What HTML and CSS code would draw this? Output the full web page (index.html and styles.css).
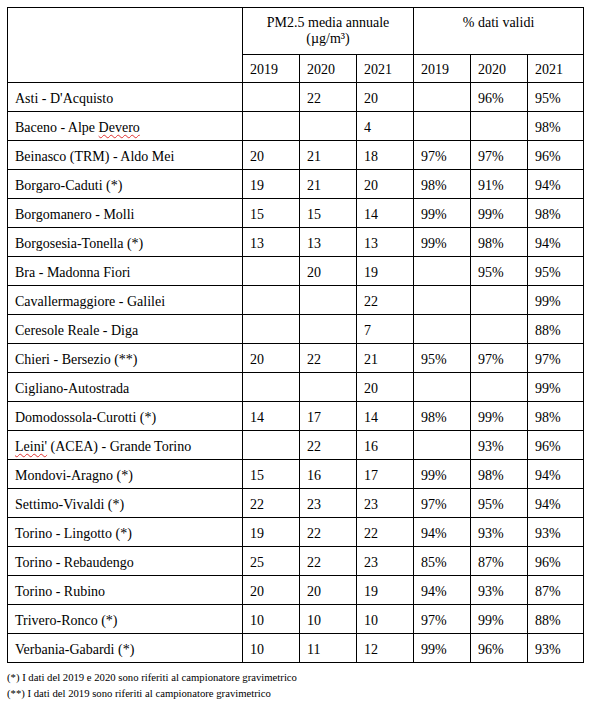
FILE: index.html
```html
<!DOCTYPE html>
<html lang="it">
<head>
<meta charset="utf-8">
<link rel="stylesheet" href="styles.css">
</head>
<body>
<div class="page">
<table class="data">
<colgroup>
<col class="c-name"><col class="c-n"><col class="c-n"><col class="c-n"><col class="c-n"><col class="c-n"><col class="c-last">
</colgroup>
<thead>
<tr class="h1">
<th rowspan="2"></th>
<th colspan="3">PM2.5 media annuale<br>(µg/m³)</th>
<th colspan="3">% dati validi</th>
</tr>
<tr class="h2">
<td>2019</td><td>2020</td><td>2021</td><td>2019</td><td>2020</td><td>2021</td>
</tr>
</thead>
<tbody>
<tr><td>Asti - D'Acquisto</td><td></td><td>22</td><td>20</td><td></td><td>96%</td><td>95%</td></tr>
<tr><td>Baceno - Alpe <span class="sp">Devero</span></td><td></td><td></td><td>4</td><td></td><td></td><td>98%</td></tr>
<tr><td>Beinasco (TRM) - Aldo Mei</td><td>20</td><td>21</td><td>18</td><td>97%</td><td>97%</td><td>96%</td></tr>
<tr><td>Borgaro-Caduti (*)</td><td>19</td><td>21</td><td>20</td><td>98%</td><td>91%</td><td>94%</td></tr>
<tr><td>Borgomanero - Molli</td><td>15</td><td>15</td><td>14</td><td>99%</td><td>99%</td><td>98%</td></tr>
<tr><td>Borgosesia-Tonella (*)</td><td>13</td><td>13</td><td>13</td><td>99%</td><td>98%</td><td>94%</td></tr>
<tr><td>Bra - Madonna Fiori</td><td></td><td>20</td><td>19</td><td></td><td>95%</td><td>95%</td></tr>
<tr><td>Cavallermaggiore - Galilei</td><td></td><td></td><td>22</td><td></td><td></td><td>99%</td></tr>
<tr><td>Ceresole Reale - Diga</td><td></td><td></td><td>7</td><td></td><td></td><td>88%</td></tr>
<tr><td>Chieri - Bersezio (**)</td><td>20</td><td>22</td><td>21</td><td>95%</td><td>97%</td><td>97%</td></tr>
<tr><td>Cigliano-Autostrada</td><td></td><td></td><td>20</td><td></td><td></td><td>99%</td></tr>
<tr><td>Domodossola-Curotti (*)</td><td>14</td><td>17</td><td>14</td><td>98%</td><td>99%</td><td>98%</td></tr>
<tr><td><span class="sp">Leini'</span> (ACEA) - Grande Torino</td><td></td><td>22</td><td>16</td><td></td><td>93%</td><td>96%</td></tr>
<tr><td>Mondovi-Aragno (*)</td><td>15</td><td>16</td><td>17</td><td>99%</td><td>98%</td><td>94%</td></tr>
<tr><td>Settimo-Vivaldi (*)</td><td>22</td><td>23</td><td>23</td><td>97%</td><td>95%</td><td>94%</td></tr>
<tr><td>Torino - Lingotto (*)</td><td>19</td><td>22</td><td>22</td><td>94%</td><td>93%</td><td>93%</td></tr>
<tr><td>Torino - Rebaudengo</td><td>25</td><td>22</td><td>23</td><td>85%</td><td>87%</td><td>96%</td></tr>
<tr><td>Torino - Rubino</td><td>20</td><td>20</td><td>19</td><td>94%</td><td>93%</td><td>87%</td></tr>
<tr><td>Trivero-Ronco (*)</td><td>10</td><td>10</td><td>10</td><td>97%</td><td>99%</td><td>88%</td></tr>
<tr><td>Verbania-Gabardi (*)</td><td>10</td><td>11</td><td>12</td><td>99%</td><td>96%</td><td>93%</td></tr>
</tbody>
</table>
<p class="note">(*) I dati del 2019 e 2020 sono riferiti al campionatore gravimetrico</p>
<p class="note">(**) I dati del 2019 sono riferiti al campionatore gravimetrico</p>
</div>
</body>
</html>
```
FILE: styles.css
```css
html, body {
  margin: 0;
  padding: 0;
  background: #ffffff;
}
.page {
  padding: 7px 0 0 7px;
  font-family: "Liberation Serif", "Times New Roman", serif;
  color: #000;
}
.data {
  border-collapse: collapse;
  table-layout: fixed;
  width: 576px;
  font-size: 14px;
}
.c-name { width: 235px; }
.c-n { width: 57px; }
.c-last { width: 56px; }
.data th, .data td {
  border: 1px solid #000;
  padding: 0 0 0 7px;
  text-align: left;
  font-weight: normal;
  line-height: 16px;
  vertical-align: middle;
}
.data tr.h1 th {
  height: 47px;
  vertical-align: top;
  text-align: center;
  padding: 7px 0 0 0;
  box-sizing: border-box;
}
.data tr.h2 td {
  height: 28px;
  padding-top: 2px;
  box-sizing: border-box;
}
.data tbody td {
  height: 29px;
  padding-top: 4px;
  box-sizing: border-box;
}
.sp {
  text-decoration: underline wavy #e03030;
  text-decoration-thickness: 1px;
  text-underline-offset: 2px;
}
.note {
  margin: 0;
  font-size: 10.7px;
  line-height: 16px;
}
.note:first-of-type {
  margin-top: 6px;
}
```
